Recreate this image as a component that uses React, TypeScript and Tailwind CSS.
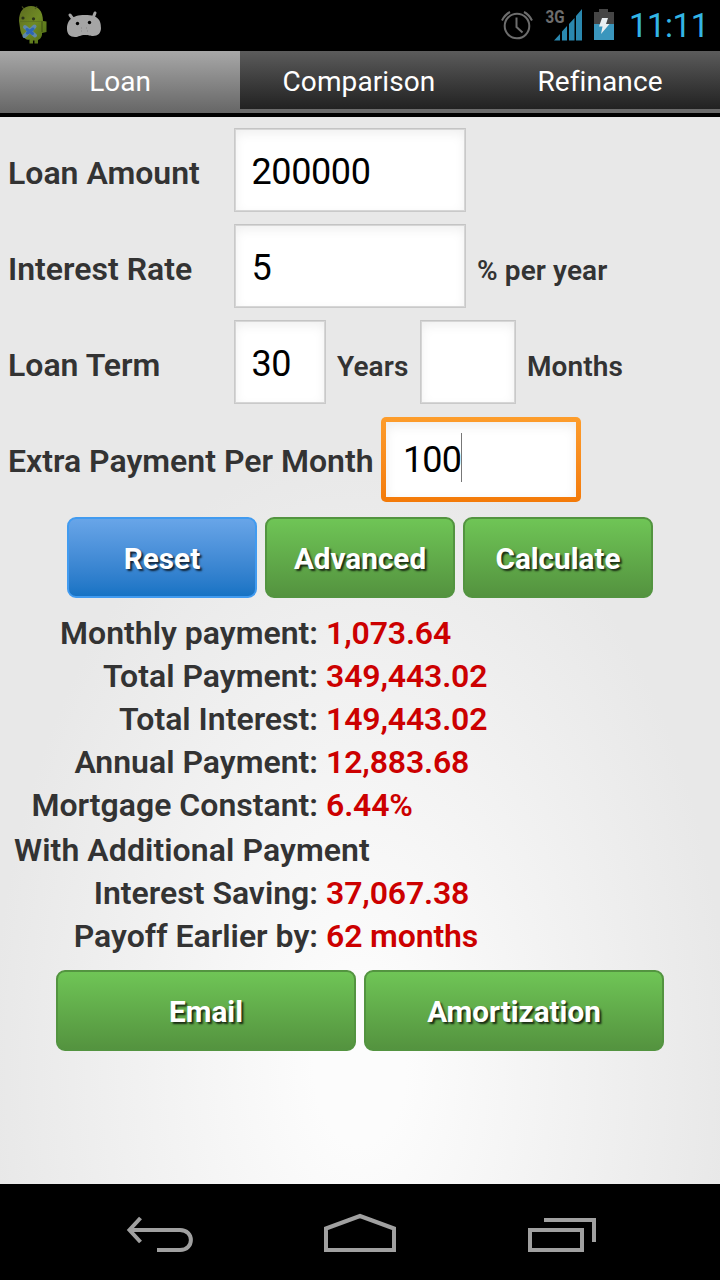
import { FC } from "react";

type FieldProps = {
    value: string;
    className: string;
};

const Field: FC<FieldProps> = ({ value, className }) => (
    <input
        type="text"
        defaultValue={value}
        className={`h-[84px] shrink-0 border border-[#c9c9c9] border-t-[#c4c4c4] bg-white pt-1 pl-[16.5px] text-[36px] tracking-[-0.4px] text-black shadow-[inset_0_0_0_1px_#d6d6d6,inset_0_4px_12px_rgba(0,0,0,0.07)] outline-none ${className}`}
    />
);

type ButtonProps = {
    label: string;
    className: string;
};

const Button: FC<ButtonProps> = ({ label, className }) => (
    <button
        className={`h-[81px] rounded-[9px] border-2 pt-1 text-[29.7px] font-bold text-white [text-shadow:2px_2px_2px_rgba(0,0,0,0.75)] ${className}`}
    >
        {label}
    </button>
);

const green = "border-[#539440] bg-linear-to-b from-[#6fc556] to-[#54933f]";

const results = [
    { label: "Monthly payment:", value: "1,073.64" },
    { label: "Total Payment:", value: "349,443.02" },
    { label: "Total Interest:", value: "149,443.02" },
    { label: "Annual Payment:", value: "12,883.68" },
    { label: "Mortgage Constant:", value: "6.44%" },
];

const savings = [
    { label: "Interest Saving:", value: "37,067.38" },
    { label: "Payoff Earlier by:", value: "62 months" },
];

type RowProps = {
    label: string;
    value: string;
};

const Row: FC<RowProps> = ({ label, value }) => (
    <div className="flex h-[43px] items-center gap-2 text-[32px] font-semibold">
        <span className="w-[318px] text-right whitespace-nowrap">{label}</span>
        <span className="tracking-[-0.15px] text-[#cc0000]">{value}</span>
    </div>
);

const StatusBar: FC = () => (
    <div className="flex h-[51px] items-center bg-black">
        <svg width="120" height="51" viewBox="0 0 120 51">
            <defs>
                <linearGradient id="robot" x1="0" x2="1" y1="0" y2="1">
                    <stop offset="0" stopColor="#5c6a20" />
                    <stop offset="0.5" stopColor="#6f8a24" />
                    <stop offset="1" stopColor="#4d6a14" />
                </linearGradient>
            </defs>
            <path
                d="M19 21c0-10 5-15 12-15s12 5 12 15l3.500 0.500v10.500l-4.500 1v2q-1 4-4 5v3.500h-3.500v-3h-1.500v3h-3.500v-4q-3 1-5-1.500-4-4-4.500-10z"
                fill="url(#robot)"
            />
            <path d="M24 9l-2-2.500M35 9l2-2.500" stroke="#4a5420" strokeWidth="1.200" />
            <path d="M42 21v11" stroke="#3c4c14" strokeWidth="1" />
            <path d="M20 21.500h22" stroke="#55682090" strokeWidth="1" />
            <circle cx="23" cy="18" r="1.600" fill="#2b331a" />
            <circle cx="33.500" cy="18.800" r="1.600" fill="#2b331a" />
            <path d="M25 27l10 8.500M34.500 26.500L24.500 36" stroke="#5f88a8" strokeWidth="4" strokeLinecap="round" />
            <path d="M27 29.500l5.500 4M33 29l-5.500 4" stroke="#2c66b4" strokeWidth="3" strokeLinecap="round" />
            <path
                d="M67 29c0-8 4-14 18-14s16 6 16 13c0 5-3 8-8 8-3 0-4-1-8-1-5 0-6 2-10 2-5 0-8-3-8-8z"
                fill="#a5a5a5"
            />
            <path d="M73 19l-3-4M93 18l2-5" stroke="#a5a5a5" strokeWidth="3" strokeLinecap="round" />
            <circle cx="77.500" cy="23.500" r="1.700" />
            <circle cx="89.500" cy="22.500" r="1.700" />
            <path d="M81 28h1M86 28h1M81 31h1M87 31h1" stroke="#858585" />
        </svg>
        <div className="flex-1" />
        <svg width="120" height="51" viewBox="500 0 120 51">
            <g fill="none" stroke="#6d6d6d" strokeWidth="2">
                <circle cx="517" cy="26" r="12.3" />
                <path d="M516.5 17.5V27l6 5.5" />
                <path d="M502 20.5q3-6 8-8.5M532 20.5q-3-6-8-8.5" />
            </g>
            <text x="545.5" y="23" fontSize="18" fontWeight="700" fill="#6d6d6d" textLength="19" lengthAdjust="spacingAndGlyphs">
                3G
            </text>
            <path
                d="M554 40.5l6-6.500v6.500zM562 31.500l5-5.500v14.500h-5zM569 24l5.500-6v22.500H569zM576 16l6-7v31.500h-6z"
                fill="#2a88af"
            />
            <path d="M594 12h5V9h9v3h6v12h-20z" fill="#454545" />
            <path d="M594 24h20v16h-20z" fill="#3a96bd" />
            <path d="M602 18h6l-2 6h3.500l-8.500 10 1.500-7.500H599z" fill="#e9eff2" />
        </svg>
        <span className="w-[100px] pl-[9px] text-[33px] tracking-[-0.5px] text-[#33b5e5]">11:11</span>
    </div>
);

const NavBar: FC = () => (
    <div className="h-24 bg-black">
        <svg width="720" height="96" viewBox="0 1184 720 96" fill="none" stroke="#a0a0a0" strokeWidth="4">
            <path d="M130 1230h50c14.500 0 14.500 20 0 20h-23" />
            <path d="M140.500 1218l-11 12 11 12" />
            <path d="M326 1228.500v21.500h68v-21.500L360 1216z" />
            <path d="M530 1230h52v20h-52zM544 1220h50v22" />
        </svg>
    </div>
);

export default function App() {
    return (
        <div className="flex h-[1280px] w-[720px] flex-col overflow-hidden font-['Roboto',sans-serif] text-[#333333]">
            <StatusBar />

            <div className="flex h-[66px] border-b-4 border-black bg-[#6b6b6b] text-[28px] text-white">
                <div className="flex w-60 items-center justify-center bg-linear-to-b from-[#a8a8a8] to-[#666666]">
                    Loan
                </div>
                <div className="mb-1 flex flex-1 bg-linear-to-b from-[#5c5c5c] to-[#222222] tracking-[0.1px]">
                    <div className="flex w-60 items-center justify-center pt-1 pr-0.5">Comparison</div>
                    <div className="flex w-60 items-center justify-center pt-1">Refinance</div>
                </div>
            </div>

            <div className="flex flex-1 flex-col bg-[radial-gradient(380px_640px_at_50%_950px,#fcfcfc_12%,#e8e8e8_97%)] pt-[11px] font-semibold">
                <div className="flex flex-col gap-3 pl-2 text-[32px]">
                    <div className="flex h-[84px] items-center">
                        <span className="w-[226px] pt-1.5">Loan Amount</span>
                        <Field value="200000" className="w-[232px] font-normal" />
                    </div>
                    <div className="flex h-[84px] items-center">
                        <span className="w-[226px] pt-1.5">Interest Rate</span>
                        <Field value="5" className="w-[232px] font-normal" />
                        <span className="pt-2.5 pl-[11px] text-[28px] tracking-[0.1px]">% per year</span>
                    </div>
                    <div className="flex h-[84px] items-center">
                        <span className="w-[226px] pt-1.5">Loan Term</span>
                        <Field value="30" className="w-[92px] font-normal" />
                        <span className="w-[94px] pt-2.5 pl-[11px] text-[28px] tracking-[0.1px]">Years</span>
                        <Field value="" className="w-24 font-normal" />
                        <span className="pt-2.5 pl-[11px] text-[28px] tracking-[0.1px]">Months</span>
                    </div>
                    <div className="flex h-[84px] items-center">
                        <span className="w-[373px] pt-1.5 whitespace-nowrap">Extra Payment Per Month</span>
                        <div className="mt-[2px] h-[85px] w-[200px] shrink-0 rounded-[5px] bg-linear-to-b from-[#fd9d2c] to-[#f37a08] p-[5px]">
                            <div className="flex h-full items-center bg-white pl-[17px] text-[36px] font-normal text-black shadow-[inset_0_4px_12px_rgba(0,0,0,0.07)]">
                                <span className="pt-[2px] tracking-[-0.9px]">100</span>
                                <span className="-mt-1 h-[49px] w-px bg-[#777777]" />
                            </div>
                        </div>
                    </div>
                </div>

                <div className="mt-[17px] flex justify-center gap-2">
                    <Button
                        label="Reset"
                        className="w-[190px] border-[#419bf0] bg-linear-to-b from-[#68a5e8] to-[#1673c4]"
                    />
                    <Button label="Advanced" className={`w-[190px] ${green}`} />
                    <Button label="Calculate" className={`w-[190px] ${green}`} />
                </div>

                <div className="mt-[13px]">
                    {results.map((row) => (
                        <Row key={row.label} {...row} />
                    ))}
                    <div className="flex h-[45px] items-center pt-0.5 pl-[14px] text-[32px] tracking-[0.08px]">
                        With Additional Payment
                    </div>
                    {savings.map((row) => (
                        <Row key={row.label} {...row} />
                    ))}
                </div>

                <div className="mt-[13px] flex justify-center gap-2">
                    <Button label="Email" className={`w-[300px] ${green}`} />
                    <Button label="Amortization" className={`w-[300px] ${green}`} />
                </div>
            </div>

            <NavBar />
        </div>
    );
}
